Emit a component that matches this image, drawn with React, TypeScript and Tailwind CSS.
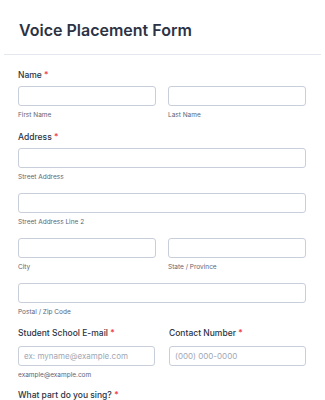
const font = { fontFamily: 'Inter, "Noto Sans", sans-serif' };

const Req = () => <span className="text-[#f23a3c]"> *</span>;

const Label = ({ text, big }: { text: string; big?: boolean }) => (
  <div
    className={
      big
        ? "text-[8.5px] leading-[13px] font-medium text-[#2c3345] mb-[6px]"
        : "text-[8.5px] leading-[12px] font-medium text-[#2c3345] mb-[5px]"
    }
  >
    {text}
    <Req />
  </div>
);

const Input = ({ placeholder }: { placeholder?: string }) => (
  <div className="h-[20px] rounded-[3px] border border-[#c8ceda] bg-white px-[5px] flex items-center text-[8px] text-[#a0a7b5]">
    {placeholder}
  </div>
);

const Sub = ({ text }: { text: string }) => (
  <div className="mt-[4px] text-[6.5px] leading-[11px] text-[#5d6576]">{text}</div>
);

const App = () => {
  return (
    <div className="w-[325px] h-[400px] overflow-hidden bg-white px-[4px]" style={font}>
      <div className="pt-[19px] pb-[13px] px-[15px] border-b border-[#e4e7ee]">
        <h1 className="text-[16px] leading-[22px] font-semibold text-[#2c3345]">
          Voice Placement Form
        </h1>
      </div>

      <div className="pl-[14px] pr-[15px] pt-[14px]">
        <Label text="Name" />
        <div className="grid grid-cols-2 gap-[12px]">
          <div>
            <Input />
            <Sub text="First Name" />
          </div>
          <div>
            <Input />
            <Sub text="Last Name" />
          </div>
        </div>

        <div className="mt-[10px]">
          <Label text="Address" />
          <Input />
          <Sub text="Street Address" />
          <div className="mt-[10px]">
            <Input />
            <Sub text="Street Address Line 2" />
          </div>
          <div className="mt-[10px] grid grid-cols-2 gap-[12px]">
            <div>
              <Input />
              <Sub text="City" />
            </div>
            <div>
              <Input />
              <Sub text="State / Province" />
            </div>
          </div>
          <div className="mt-[10px]">
            <Input />
            <Sub text="Postal / Zip Code" />
          </div>
        </div>

        <div className="mt-[9px] grid grid-cols-2 gap-[14px]">
          <div>
            <Label text="Student School E-mail" big />
            <Input placeholder="ex: myname@example.com" />
            <Sub text="example@example.com" />
          </div>
          <div>
            <Label text="Contact Number" big />
            <Input placeholder="(000) 000-0000" />
          </div>
        </div>

        <div className="mt-[8px]">
          <Label text="What part do you sing?" big />
        </div>
      </div>
    </div>
  );
};

export default App;
